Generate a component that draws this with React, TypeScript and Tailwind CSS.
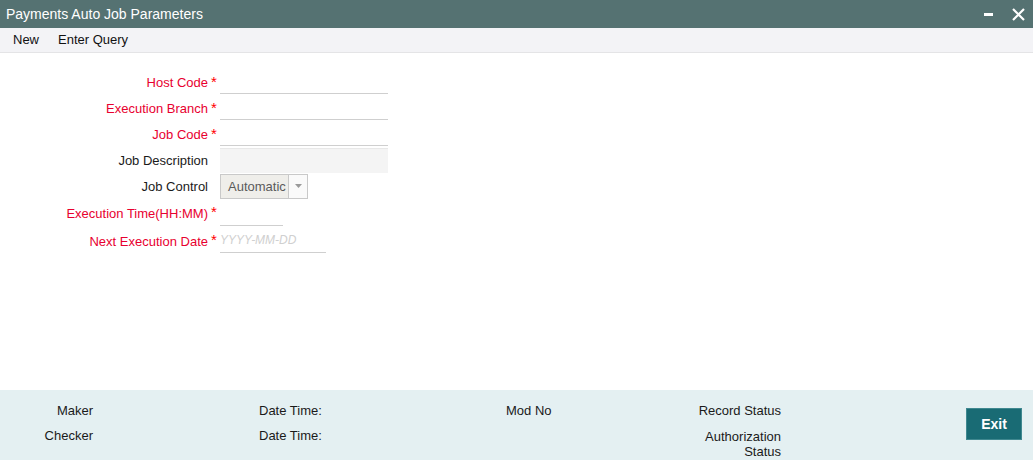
import React from 'react';

const font = {fontFamily: '"Liberation Sans", Arial, sans-serif'};

interface FieldRowProps {
    label: string;
    required?: boolean;
    height?: string;
    children: React.ReactNode;
}

const FieldRow = ({label, required = false, height = 'h-[26px]', children}: FieldRowProps) => (
    <div className={`flex items-center ${height}`}>
        <div className={`w-[208px] mt-[2px] text-right text-[13px] ${required ? 'text-[#e8002f]' : 'text-[#1a1a1a]'}`}>
            {label}
        </div>
        <div className="w-[12px] h-full flex justify-center">
            {required && <span className="text-[#ff0000] text-[15px] leading-none mt-[5px]">*</span>}
        </div>
        <div className="h-full flex items-center">{children}</div>
    </div>
);

const App = () => {
    return (
        <div className="w-[1033px] h-[460px] flex flex-col bg-white overflow-hidden" style={font}>
            {/* title bar */}
            <div className="h-[28px] bg-[#557272] flex items-center justify-between pl-[6px] pr-[8px]">
                <span className="text-white text-[14px]">Payments Auto Job Parameters</span>
                <div className="flex items-center gap-[19px]">
                    <div className="w-[9px] h-[3px] bg-white mt-[1px]"/>
                    <svg width="13" height="13" viewBox="0 0 13 13">
                        <path d="M1 1 L12 12 M12 1 L1 12" stroke="white" strokeWidth="2.2"/>
                    </svg>
                </div>
            </div>

            {/* toolbar */}
            <div className="h-[25px] bg-[#f3f3f6] border-b border-[#e4e4e6] flex items-center pl-[13px] gap-[19px] text-[13px] text-[#111]">
                <span>New</span>
                <span>Enter Query</span>
            </div>

            {/* form */}
            <div className="flex-1 pt-[16px]">
                <FieldRow label="Host Code" required>
                    <div className="w-[168px] h-[23px] border-b border-[#cfcfcf]"/>
                </FieldRow>
                <FieldRow label="Execution Branch" required>
                    <div className="w-[168px] h-[23px] border-b border-[#cfcfcf]"/>
                </FieldRow>
                <FieldRow label="Job Code" required>
                    <div className="w-[168px] h-[23px] border-b border-[#cfcfcf]"/>
                </FieldRow>
                <FieldRow label="Job Description">
                    <div className="w-[168px] h-[25px] bg-[#f4f4f4] border-t border-[#e8e8e8]"/>
                </FieldRow>
                <FieldRow label="Job Control">
                    <div className="w-[88px] h-[25px] flex border border-[#c9c9c9] bg-[#efeeea]">
                        <span className="flex-1 pl-[7px] text-[13px] text-[#5a5a5a] leading-[24px]">Automatic</span>
                        <div className="w-[19px] bg-[#fafafa] border-l border-[#c9c9c9] flex items-center justify-center">
                            <svg width="7" height="4" viewBox="0 0 7 4">
                                <path d="M0 0 L7 0 L3.5 4 Z" fill="#9a9a9a"/>
                            </svg>
                        </div>
                    </div>
                </FieldRow>
                <FieldRow label="Execution Time(HH:MM)" required height="h-[28px]">
                    <div className="w-[63px] h-[25px] border-b border-[#cfcfcf]"/>
                </FieldRow>
                <FieldRow label="Next Execution Date" required height="h-[27px]">
                    <div className="w-[106px] h-[25px] border-b border-[#cfcfcf] flex items-center">
                        <span className="text-[12px] italic text-[#d0d0d0]">YYYY-MM-DD</span>
                    </div>
                </FieldRow>
            </div>

            {/* footer */}
            <div className="h-[70px] bg-[#e4f0f2] flex text-[13px] text-[#1a1a1a] pt-[13px]">
                <div className="w-[93px] text-right flex flex-col gap-[9px] leading-[16px]">
                    <span>Maker</span>
                    <span>Checker</span>
                </div>
                <div className="w-[166px]"/>
                <div className="w-[247px] flex flex-col gap-[9px] leading-[16px]">
                    <span>Date Time:</span>
                    <span>Date Time:</span>
                </div>
                <div className="w-[150px] leading-[16px]">
                    <span>Mod No</span>
                </div>
                <div className="w-[125px] text-right flex flex-col gap-[10px] leading-[16px]">
                    <span>Record Status</span>
                    <span className="leading-[15px]">Authorization<br/>Status</span>
                </div>
                <div className="flex-1 flex justify-end pr-[11px] pt-[5px]">
                    <button className="w-[56px] h-[32px] bg-[#196b74] border border-[#3f8890] text-white text-[14px] font-bold">
                        Exit
                    </button>
                </div>
            </div>
        </div>
    );
};

export default App;
